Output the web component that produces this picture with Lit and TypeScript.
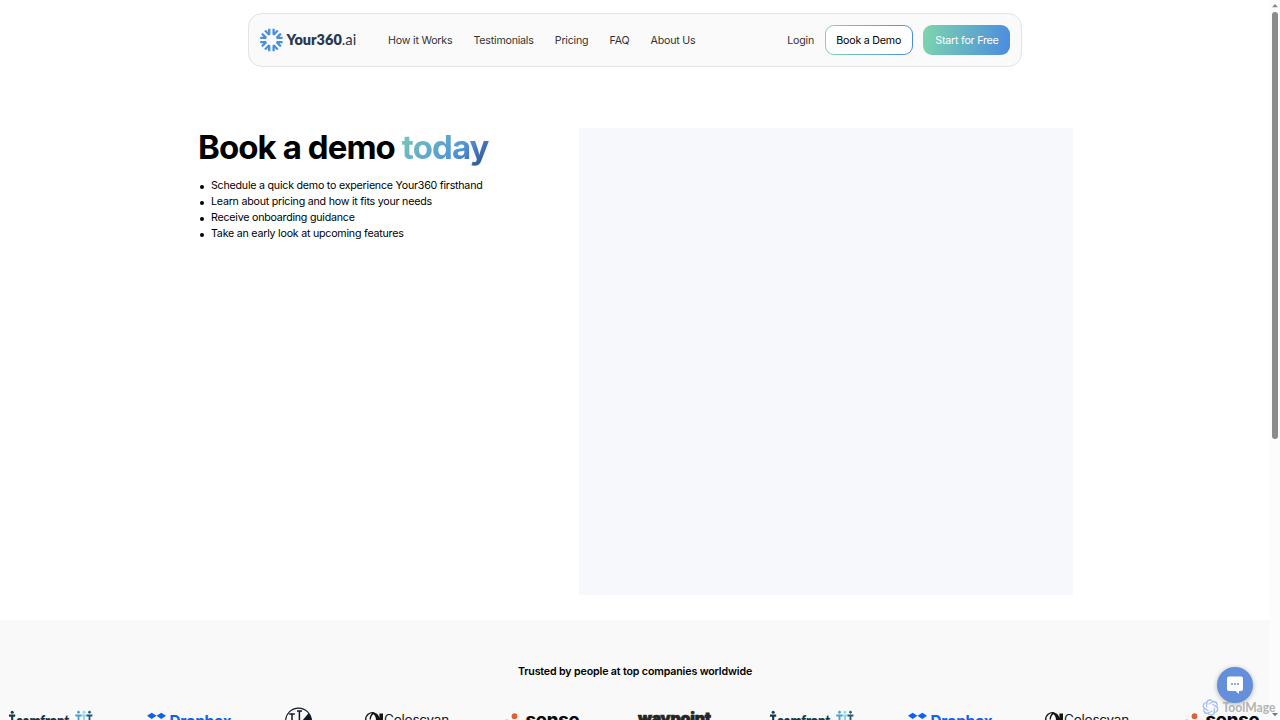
import { LitElement, html, css, svg, nothing } from "lit";
import { customElement, property } from "lit/decorators.js";

const rays = [0, 45, 90, 135, 180, 225, 270, 315];

@customElement("brand-logo")
class BrandLogo extends LitElement {
  static styles = css`
    :host { display: block; width: 98px; height: 24px; }
    svg { display: block; }
    .word { font-family: Lato, sans-serif; font-size: 14.4px; letter-spacing: 0; fill: #27384f; }
    .bold { font-weight: 800; }
  `;
  render() {
    return html`<svg width="98" height="24" viewBox="0 0 98 24">
      <g transform="translate(11.4 12)" fill="none" stroke="#4b8fdc" stroke-width="2.3" stroke-linejoin="bevel">
        ${rays.map((a) => svg`<path transform="rotate(${a})" d="M2.2 -11.2V-5.3L6.37 -9.47" />`)}
      </g>
      <text class="word bold" x="26.4" y="17" textLength="55.4" lengthAdjust="spacingAndGlyphs">Your360</text>
      <text class="word" x="81.8" y="17" textLength="14.5" lengthAdjust="spacingAndGlyphs">.ai</text>
    </svg>`;
  }
}

@customElement("company-logos")
class CompanyLogos extends LitElement {
  @property({ type: Boolean }) compact = false;

  static styles = css`
    :host { display: flex; gap: 54px; flex: none; }
    svg { display: block; flex: none; overflow: visible; }
    .team { font: 800 15px Lato, sans-serif; fill: #163848; }
    .drop { font: 700 14.5px Inter, sans-serif; fill: #0b62ee; }
    .colo { font: 400 12.5px Inter, sans-serif; fill: #151515; }
    .sense { font: 800 18px Inter, sans-serif; fill: #0b0b0b; }
    .way { font: 900 16px Inter, sans-serif; fill: #252525; stroke: #252525; stroke-width: 0.7; }
  `;
  render() {
    return html`
      <svg width="84" height="32" viewBox="0 0 84 32">
        <circle cx="3.2" cy="5.2" r="1.5" fill="#163848" />
        <path d="M0 8.6H6.2M3.2 7.6V18" stroke="#163848" stroke-width="2.1" />
        <text class="team" x="7" y="18.5" textLength="53" lengthAdjust="spacingAndGlyphs">eamfront</text>
        <g fill="#4b9fc9" stroke="#4b9fc9"><circle cx="69.5" cy="5.2" r="1" /><path d="M66.3 8.5H72.5M69.5 7.5V18" stroke-width="1.8" /></g>
        <g fill="#8bd5ed" stroke="#8bd5ed"><circle cx="75" cy="5.2" r="1" /><path d="M72.2 8.5H78M75 7.5V18" stroke-width="1.8" /></g>
        <g fill="#24567a" stroke="#24567a"><circle cx="80.5" cy="5.2" r="1" /><path d="M77.7 8.5H83.4M80.5 7.5V18" stroke-width="1.8" /></g>
      </svg>
      <svg width="84" height="32" viewBox="0 0 84 32">
        <path d="M0 8.8L4.7 5.7L9.5 8.8L4.7 11.9ZM9.5 8.8L14.3 5.7L19 8.8L14.3 11.9ZM0 15.8L4.7 12.8L9.5 15.8L4.7 18.9ZM9.5 15.8L14.3 12.8L19 15.8L14.3 18.9Z" fill="#0b62ee" />
        <text class="drop" x="22.5" y="19" textLength="62" lengthAdjust="spacingAndGlyphs">Dropbox</text>
      </svg>
      ${this.compact ? nothing : html`<svg width="27" height="32" viewBox="0 0 27 32">
        <circle cx="13.5" cy="14" r="12.9" fill="none" stroke="#101829" stroke-width="1.1" />
        <path d="M17 14L23.5 6.3A12.9 12.9 0 0 1 25.8 19Z" fill="#101829" />
        <path d="M4.2 7H9.8M7 7V20M12 4H17M14.4 4V20" stroke="#101829" stroke-width="1.5" />
      </svg>`}
      <svg width="84" height="32" viewBox="0 0 84 32">
        <path d="M8.5 6A6.8 6.8 0 1 0 8.5 19M8.5 6Q4.3 7.4 4.2 12.4" fill="none" stroke="#151515" stroke-width="1.4" />
        <path d="M6 5.7Q12.5 5.4 13.4 11V6.4H17V18H9Q12 10 6 5.7Z" fill="#151515" />
        <text class="colo" x="18" y="17" textLength="65" lengthAdjust="spacingAndGlyphs">Coloscyan</text>
      </svg>
      <svg width="77" height="32" viewBox="0 0 77 32">
        <circle cx="10.5" cy="9.2" r="2.9" fill="#df6039" />
        <circle cx="2.8" cy="14.6" r="2.4" fill="#f2c36d" />
        <text class="sense" x="21.5" y="19" textLength="54" lengthAdjust="spacingAndGlyphs">sense</text>
      </svg>
      <svg width="81" height="32" viewBox="0 0 81 32">
        <text class="way" x="3" y="17" textLength="73" lengthAdjust="spacingAndGlyphs">waypoint</text>
      </svg>
    `;
  }
}

@customElement("app-root")
class AppRoot extends LitElement {
  static styles = css`
    :host {
      display: flex; position: relative; width: 1280px; height: 720px; overflow: hidden;
      background: #fff; color: #000; font-family: Inter, sans-serif; font-size: 10.67px; letter-spacing: -0.22px;
    }
    * { box-sizing: border-box; }
    .page { width: 1270px; height: 720px; flex: none; overflow: hidden; display: flex; flex-direction: column; }
    .header {
      width: 773.5px; height: 54px; flex: none; margin: 13px 0 0 248.4px; padding: 0 10.5px 0 10.3px;
      display: flex; align-items: center; background: #fafafa; border: 1px solid #e2e3e4; border-radius: 14px;
    }
    .nav { display: flex; gap: 21.2px; margin-left: 30.4px; color: #333; white-space: nowrap; }
    .actions { margin-left: auto; display: flex; align-items: center; white-space: nowrap; }
    .login { color: #333; margin-right: 10.7px; }
    .button { height: 30px; border-radius: 9px; display: flex; align-items: center; justify-content: center; }
    .outline {
      width: 88px; margin-right: 10.67px; border: 1px solid transparent;
      background: linear-gradient(#fff, #fff) padding-box, linear-gradient(90deg, #83d5ae, #4b8ddc) border-box;
    }
    .filled { width: 87px; color: #fff; background: linear-gradient(100deg, #7dd6ad, #4b8be0); }
    .hero { flex: none; height: 553px; padding: 61px 0 0 198px; display: flex; }
    .intro { width: 381px; flex: none; }
    .title { margin: 0; font-size: 33px; line-height: 39px; font-weight: 700; letter-spacing: -0.92px; white-space: nowrap; }
    .today {
      display: inline-block; background: linear-gradient(135deg, #7fcdb0 0%, #5298d8 60%, #4a87d1 70%, #284875 100%);
      -webkit-background-clip: text; background-clip: text; color: transparent;
    }
    .points { margin: 11px 0 0; padding: 0; list-style: none; font-size: 10.67px; line-height: 16px; letter-spacing: -0.226px; }
    .points li { display: flex; align-items: center; padding-left: 2px; }
    .points li::before { content: ""; width: 4px; height: 4px; margin: 1px 7px 0 0; border-radius: 50%; background: #000; }
    .calendar { width: 494px; height: 466.7px; background: #f6f8fc; }
    .trusted { flex: none; height: 220px; background: #f9f9f9; display: flex; flex-direction: column; }
    .caption { margin: 44px 0 0; text-align: center; line-height: 16px; font-size: 10.67px; font-weight: 600; letter-spacing: -0.15px; }
    .marquee { display: flex; gap: 53.6px; margin: 27px 0 0 9px; }
    .scrollbar { width: 10px; height: 720px; flex: none; background: #fcfcfc; display: flex; flex-direction: column; align-items: center; justify-content: space-between; }
    .thumb { width: 6px; height: 427px; border-radius: 3px; background: #8b8b8b; margin: 1px 0 auto; }
    .arrow { width: 10px; height: 11px; display: block; flex: none; }
    .chat {
      position: absolute; left: 1217px; top: 667px; width: 36px; height: 36px; border-radius: 50%;
      background: #648fdb; box-shadow: 0 1px 5px rgba(0, 0, 0, 0.3);
      display: flex; align-items: center; justify-content: center;
    }
    .watermark { position: absolute; left: 1202px; top: 698px; display: block; overflow: visible; }
    .tool { font: 700 13.5px Lato, sans-serif; letter-spacing: 0; fill: #a9a9aa; fill-opacity: 0.88; }
  `;
  render() {
    return html`
      <div class="page">
        <header class="header">
          <brand-logo></brand-logo>
          <nav class="nav">
            <span>How it Works</span><span>Testimonials</span><span>Pricing</span><span>FAQ</span><span>About Us</span>
          </nav>
          <div class="actions">
            <span class="login">Login</span>
            <span class="button outline">Book a Demo</span>
            <span class="button filled">Start for Free</span>
          </div>
        </header>
        <main class="hero">
          <div class="intro">
            <h1 class="title">Book a demo <span class="today">today</span></h1>
            <ul class="points">
              <li>Schedule a quick demo to experience Your360 firsthand</li>
              <li>Learn about pricing and how it fits your needs</li>
              <li>Receive onboarding guidance</li>
              <li>Take an early look at upcoming features</li>
            </ul>
          </div>
          <div class="calendar"></div>
        </main>
        <section class="trusted">
          <p class="caption">Trusted by people at top companies worldwide</p>
          <div class="marquee"><company-logos></company-logos><company-logos compact></company-logos></div>
        </section>
      </div>
      <div class="scrollbar">
        <svg class="arrow" viewBox="0 0 10 11"><path d="M2 7.3L5 4L8 7.3Z" fill="#888" /></svg>
        <div class="thumb"></div>
        <svg class="arrow" viewBox="0 0 10 11"><path d="M2 4L5 7.3L8 4Z" fill="#777" /></svg>
      </div>
      <div class="chat">
        <svg width="18" height="20" viewBox="0 0 18 20">
          <path d="M3 1.5H15Q17 1.5 17 3.5V14Q17 16 15 16H13V19L9.5 16H3Q1 16 1 14V3.5Q1 1.5 3 1.5Z" fill="#fff" />
          <g fill="#648fdb"><circle cx="6" cy="9" r="1" /><circle cx="9" cy="9" r="1" /><circle cx="12" cy="9" r="1" /></g>
        </svg>
      </div>
      <svg class="watermark" width="76" height="20" viewBox="0 0 76 20">
        <g fill="none" stroke="#a2bdf2" stroke-width="1.1" transform="translate(8.5 9.5)">
          ${[0, 60, 120, 180, 240, 300].map((a) => svg`<path transform="rotate(${a})" d="M-3.8 -3.2V-4.4A3.3 3.3 0 0 1 2.2 -6.2M-1.9 -3.3L2 -5.6A3.2 3.2 0 0 1 6.3 -3.8" />`)}
        </g>
        <text class="tool" x="20.5" y="13.8" textLength="53" lengthAdjust="spacingAndGlyphs">ToolMage</text>
      </svg>
    `;
  }
}
